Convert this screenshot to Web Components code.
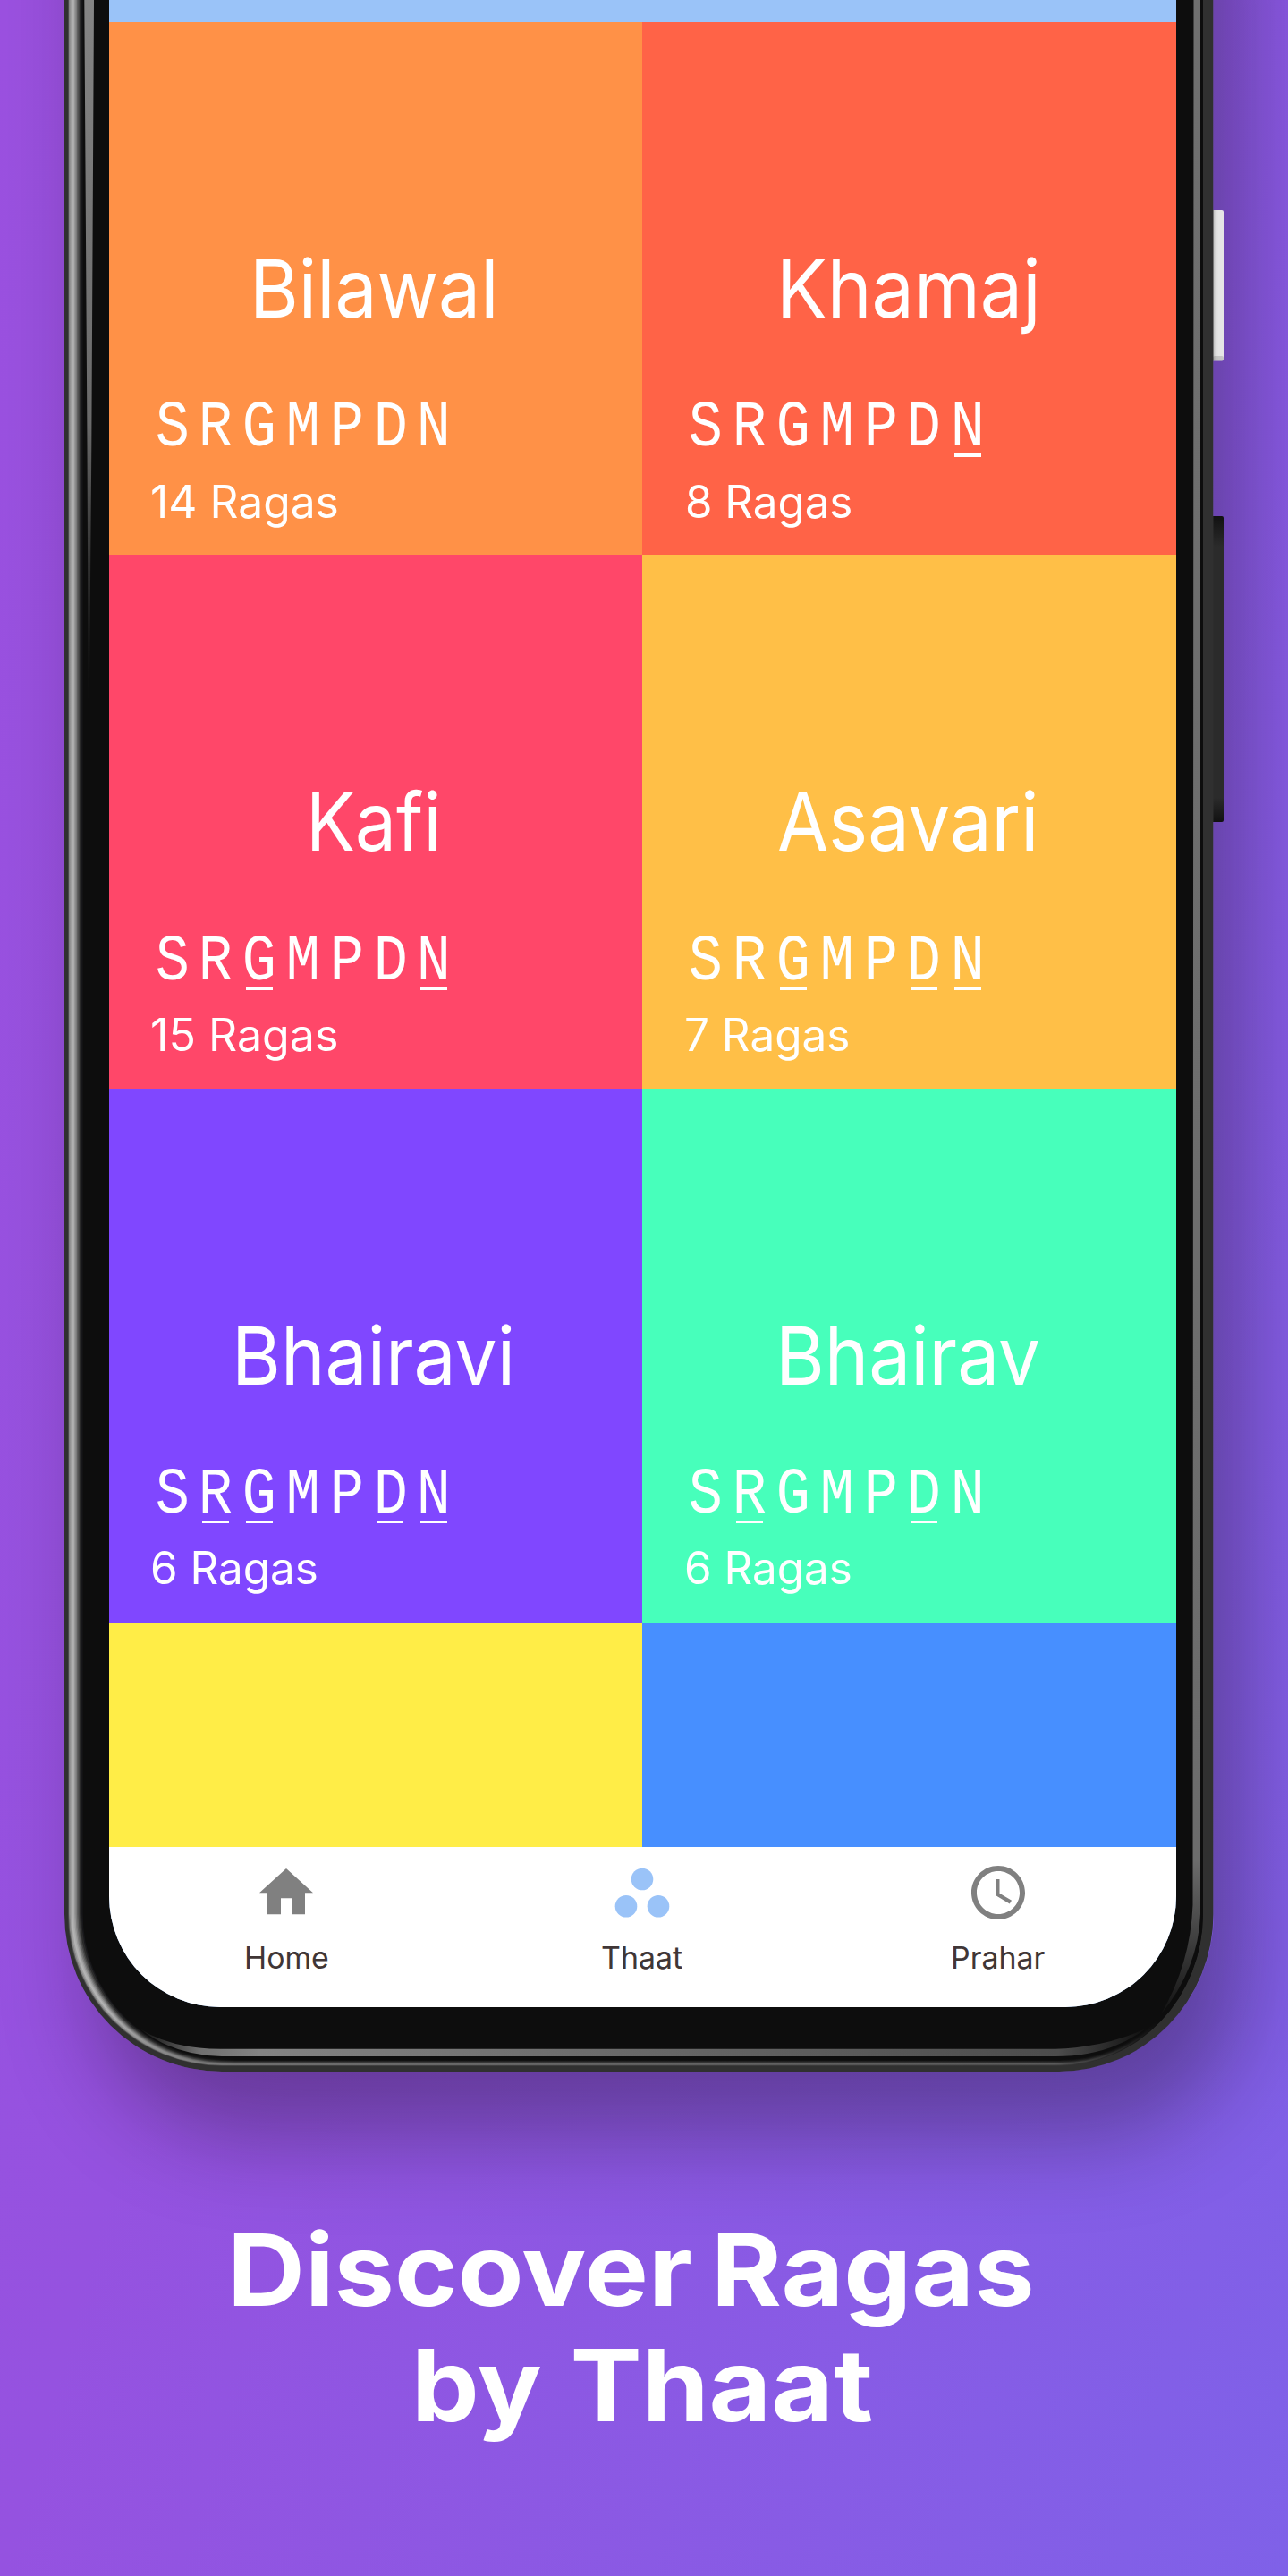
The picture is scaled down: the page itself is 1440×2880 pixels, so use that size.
<!DOCTYPE html>
<html lang="en">
<head>
<meta charset="utf-8">
<title>Discover Ragas by Thaat</title>
<style>
html,body{margin:0;padding:0}
body{width:1440px;height:2880px;overflow:hidden;font-family:Inter,"Liberation Sans",sans-serif}
</style>
</head>
<body>
<promo-page>
  <phone-frame slot="device">
    <thaat-grid>
      <thaat-tile color="#ff9147" name="Bilawal" ink="286,265.6" notes="S R G M P D N" count="14 Ragas" cink="170.3,206.5"></thaat-tile>
      <thaat-tile color="#ff6347" name="Khamaj" ink="277.5,284.5" notes="S R G M P D N_" count="8 Ragas" cink="171,183"></thaat-tile>
      <thaat-tile color="#ff4769" name="Kafi" ink="348,140.5" notes="S R G_ M P D N_" count="15 Ragas" cink="170.3,206"></thaat-tile>
      <thaat-tile color="#ffbf47" name="Asavari" ink="274,286" notes="S R G_ M P D_ N_" count="7 Ragas" cink="170.3,181"></thaat-tile>
      <thaat-tile color="#8047ff" name="Bhairavi" ink="266,306" notes="S R_ G_ M P D_ N_" count="6 Ragas" cink="170.3,183.5"></thaat-tile>
      <thaat-tile color="#47ffbb" name="Bhairav" ink="276.5,288" notes="S R_ G M P D_ N" count="6 Ragas" cink="170.3,183.5"></thaat-tile>
      <thaat-tile color="#ffed47"></thaat-tile>
      <thaat-tile color="#478fff"></thaat-tile>
    </thaat-grid>
    <nav-bar>
      <nav-item label="Home" ink="153,92"><svg viewBox="0 0 24 24" fill="#808080"><path d="M10 20.1v-6h4v6h5v-8h3L12 3 2 12.1h3v8z"/></svg></nav-item>
      <nav-item label="Thaat" ink="153.7,90"><svg viewBox="0 0 24 24" fill="#9ac3f8"><circle cx="12" cy="7" r="4.1"/><circle cx="6" cy="17.1" r="4.1"/><circle cx="18" cy="17.1" r="4.1"/></svg></nav-item>
      <nav-item label="Prahar" ink="147.5,103.5"><svg viewBox="0 0 24 24" fill="#808080"><path d="M11.99 2C6.47 2 2 6.48 2 12s4.47 10 9.99 10C17.52 22 22 17.52 22 12S17.52 2 11.99 2zM12 20c-4.42 0-8-3.58-8-8s3.58-8 8-8 8 3.58 8 8-3.58 8-8 8z"/><path d="M12.5 7H11v6l5.25 3.15.75-1.23-4.5-2.67z"/></svg></nav-item>
    </nav-bar>
  </phone-frame>
  <fit-text slot="title" text="Discover Ragas" size="112" weight="700" line="129" space="-7" ink="262,891"></fit-text>
  <fit-text slot="title" text="by Thaat" size="112" weight="700" line="129" space="3" ink="468,507.5"></fit-text>
</promo-page>

<script>
const SCREEN_X = 121.5;
const pen = document.createElement('canvas').getContext('2d');

class Base extends HTMLElement {
  connectedCallback() {
    if (this.shadowRoot) return;
    this.attachShadow({ mode: 'open' }).innerHTML = this.view();
  }
}

/* One line of text whose ink starts at a given x and is stretched to a given width. */
class FitText extends Base {
  view() {
    const text = this.getAttribute('text');
    const size = this.getAttribute('size');
    const weight = this.getAttribute('weight') || 400;
    const space = Number(this.getAttribute('space') || 0);
    const [left, width] = this.getAttribute('ink').split(',').map(Number);
    pen.font = `${weight} ${size}px Inter`;
    const m = pen.measureText(text);
    const natural = m.actualBoundingBoxLeft + m.actualBoundingBoxRight + space * (text.split(' ').length - 1);
    const scale = width / natural;
    return `<style>
      :host{display:block;white-space:nowrap;font:${weight} ${size}px/${this.getAttribute('line')}px Inter,"Liberation Sans",sans-serif}
      span{display:inline-block;vertical-align:top;margin-left:${left + m.actualBoundingBoxLeft * scale}px;
        word-spacing:${space}px;transform:scaleX(${scale.toFixed(4)});transform-origin:0 0}
    </style><span>${text}</span>`;
  }
}
customElements.define('fit-text', FitText);

class ThaatTile extends Base {
  view() {
    const name = this.getAttribute('name');
    const style = `<style>
      :host{display:flex;flex-direction:column;height:596.6px;box-sizing:border-box;padding-top:248px;
        background:${this.getAttribute('color')};color:#fff;overflow:hidden}
      .notes{display:flex;margin:77.2px 0 20px 46.6px}
      .notes div{width:48.8px;display:flex;flex-direction:column;align-items:center;
        font:73px/58px "Liberation Mono",monospace}
      .notes span{transform:scaleX(.87)}
      i{width:30px;height:3.5px;margin-top:-1.2px}
      .low i{background:#fff}
    </style>`;
    if (!name) return style;
    const shift = (v) => { const [a, b] = v.split(',').map(Number); return `${a - SCREEN_X},${b}`; };
    const notes = this.getAttribute('notes').split(' ')
      .map(n => `<div class="${n[1] ? 'low' : ''}"><span>${n[0]}</span><i></i></div>`).join('');
    return `${style}
      <fit-text text="${name}" size="90" line="100" ink="${shift(this.getAttribute('ink'))}"></fit-text>
      <div class="notes">${notes}</div>
      <fit-text text="${this.getAttribute('count')}" size="50" line="60" ink="${shift(this.getAttribute('cink'))}"></fit-text>`;
  }
}
customElements.define('thaat-tile', ThaatTile);

class ThaatGrid extends Base {
  view() {
    return `<style>
      :host{display:grid;grid-template-columns:1fr 1fr;grid-auto-rows:596.4px;height:2040px;overflow:hidden}
    </style><slot></slot>`;
  }
}
customElements.define('thaat-grid', ThaatGrid);

class NavBar extends Base {
  view() {
    return `<style>:host{display:grid;grid-template-columns:repeat(3,minmax(0,1fr));flex:1;background:#fff;color:#403636}</style><slot></slot>`;
  }
}
customElements.define('nav-bar', NavBar);

class NavItem extends Base {
  view() {
    return `<style>
      :host{display:flex;flex-direction:column;padding-top:15.3px}
      .icon{display:flex;justify-content:center;height:72px}
      ::slotted(svg){width:72px;height:72px}
      fit-text{margin-top:17px}
    </style>
    <div class="icon"><slot></slot></div>
    <fit-text text="${this.getAttribute('label')}" size="34" line="40" ink="${this.getAttribute('ink')}"></fit-text>`;
  }
}
customElements.define('nav-item', NavItem);

class PhoneFrame extends Base {
  /* Metal rim: nested outlines, each with its own inset per side and tint. */
  rim() {
    const stops = [
      [4, 6.5, '#4a4a4a', '#555', '#3c3c3c'], [5, 7.2, '#858585', '#777', '#505050'],
      [6.5, 8, '#a0a0a0', '#6e6e6e', '#5a5a5a'], [8, 9, '#b4b4b4', '#555', '#444'],
      [9.5, 9.8, '#acacac', '#444', '#333'], [11, 10.5, '#989898', '#303030', '#282828'],
      [12.5, 11.2, '#7c7c7c', '#202020', '#1c1c1c'], [14, 12, '#606060', '#141414', '#111'],
      [15.5, 12.8, '#444', '#0d0d0d', '#0d0d0d'], [17, 13.5, '#2a2a2a', '#0d0d0d', '#0d0d0d'],
      [19, 14.5, '#17171a', '#0d0d0d', '#0d0d0d'], [20.5, 15, '#0d0d0d', '#0d0d0d', '#0d0d0d']];
    let defs = '', shapes = '';
    stops.forEach(([l, b, c0, c1, c2], i) => {
      const x = 72 + l, y = 2316 - b, r = 1345 - Math.min(i * .25, 2), h = 2140;
      defs += `<linearGradient id="g${i}" gradientUnits="userSpaceOnUse" x1="72" y1="0" x2="1345" y2="0">
        <stop offset=".035" stop-color="${c0}"/><stop offset=".15" stop-color="${c1}"/>
        <stop offset=".87" stop-color="${c2}"/><stop offset=".96" stop-color="#0d0d0d"/></linearGradient>`;
      shapes += `<path fill="url(#g${i})" d="M${x} 0V${h}A${248 - x} ${y - h} 0 0 0 248 ${y}H1184A${r - 1184} ${y - h} 0 0 0 ${r} ${h}V0z"/>`;
    });
    return `<defs>${defs}
      <linearGradient id="bottom" gradientUnits="userSpaceOnUse" x1="155" y1="0" x2="1285" y2="0">
        <stop offset="0" stop-color="#0d0d0d"/><stop offset=".06" stop-color="#6f6f6f"/><stop offset=".12" stop-color="#838383"/>
        <stop offset=".5" stop-color="#686868"/><stop offset=".91" stop-color="#4c4c4c"/><stop offset="1" stop-color="#0d0d0d"/></linearGradient>
      <linearGradient id="left" x1="0" y1="0" x2="0" y2="1">
        <stop offset="0" stop-color="#858585"/><stop offset=".6" stop-color="#6a6a6a"/><stop offset=".8" stop-color="#303030"/><stop offset="1" stop-color="#0d0d0d"/></linearGradient>
      <linearGradient id="right" gradientUnits="userSpaceOnUse" x1="0" y1="0" x2="0" y2="2260">
        <stop offset="0" stop-color="#6f6f6f"/><stop offset=".92" stop-color="#6c6c6c"/><stop offset=".95" stop-color="#4b4b4b"/><stop offset="1" stop-color="#0d0d0d"/></linearGradient>
      <linearGradient id="power" x1="0" y1="0" x2="1" y2="0"><stop offset="0" stop-color="#999"/><stop offset=".35" stop-color="#dadada"/><stop offset=".6" stop-color="#e5e5e5"/></linearGradient>
      <linearGradient id="volume" x1="0" y1="0" x2="0" y2="1"><stop offset="0" stop-color="#111"/><stop offset=".1" stop-color="#2b2b2b"/><stop offset=".92" stop-color="#2b2b2b"/><stop offset="1" stop-color="#111"/></linearGradient>
      </defs>
      <rect x="1354" y="235" width="14" height="168.5" rx="2" fill="url(#power)"/>
      <rect x="1356" y="398" width="12" height="5.5" rx="2" fill="#0002"/>
      <rect x="1354" y="577" width="14" height="342" rx="2" fill="url(#volume)"/>
      <path fill="#303030" d="M72 0V2140A176 176 0 0 0 248 2316H1184A172.5 176 0 0 0 1356.5 2140V0z"/>
      ${shapes}
      <path fill="url(#left)" d="M94.3 0L97.5 500L98.8 790H99.8L102.3 500L105 0z"/>
      <path fill="url(#right)" d="M1334.5 0H1342V2140Q1340 2200 1298 2252Q1331 2195 1333.5 2130z"/>
      <path fill="url(#bottom)" d="M156 2268Q192 2291 248 2290.7H1180Q1235 2289 1281 2268Q1240 2299 1180 2299H248Q194 2298 156 2268z"/>`;
  }
  view() {
    return `<style>
      :host{display:grid;grid-template-columns:1440px;grid-template-rows:2420px;overflow:visible}
      .shadow,.rim,.screen{grid-area:1/1}
      .shadow{margin:-300px 83.5px 104px 72px;border-radius:176px;box-shadow:34px 72px 100px rgba(20,10,20,.34)}
      .rim{width:1440px;height:2420px;display:block}
      .screen{margin:-15px 125px 0 121.5px;width:1193.5px;height:2258.7px;display:flex;flex-direction:column;
        border-radius:0 0 124px 124px;overflow:hidden;background:#9ac3f8}
      .bar{height:40px;flex:none}
    </style>
    <div class="shadow"></div>
    <svg class="rim" viewBox="0 0 1440 2420">${this.rim()}</svg>
    <div class="screen"><div class="bar"></div><slot></slot></div>`;
  }
}
customElements.define('phone-frame', PhoneFrame);

class PromoPage extends Base {
  view() {
    return `<style>
      :host{display:flex;flex-direction:column;width:1440px;height:2880px;overflow:hidden;color:#fff;
        background:linear-gradient(105deg,#9b51e0 0%,#9552e0 35%,#7f61e8 100%)}
      .title{display:flex;flex-direction:column;padding-top:53px}
    </style>
    <slot name="device"></slot>
    <div class="title"><slot name="title"></slot></div>`;
  }
}
customElements.define('promo-page', PromoPage);
</script>
</body>
</html>
